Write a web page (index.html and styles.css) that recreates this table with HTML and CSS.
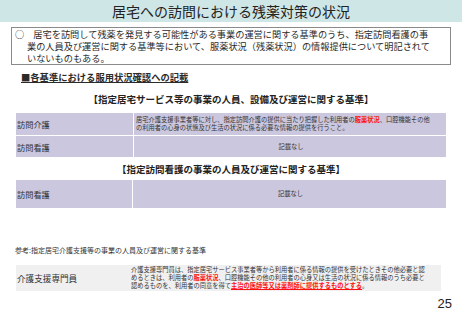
FILE: index.html
```html
<!DOCTYPE html>
<html lang="ja">
<head>
<meta charset="utf-8">
<link rel="stylesheet" href="styles.css">
</head>
<body>
<div class="slide">
  <header class="title">居宅への訪問における残薬対策の状況</header>
  <div class="summary">
    <p>○　居宅を訪問して残薬を発見する可能性がある事業の運営に関する基準のうち、指定訪問看護の事<br>業の人員及び運営に関する基準等において、服薬状況（残薬状況）の情報提供について明記されて<br>いないものもある。</p>
  </div>
  <div class="subhead">■各基準における服用状況確認への記載</div>
  <div class="heading h1">【指定居宅サービス等の事業の人員、設備及び運営に関する基準】</div>
  <div class="table t1">
    <div class="cell label">訪問介護</div>
    <div class="cell body"><p class="txt">居宅介護支援事業者等に対し、指定訪問介護の提供に当たり把握した利用者の<span class="red">服薬状況</span>、口腔機能その他<br>の利用者の心身の状態及び生活の状況に係る必要な情報の提供を行うこと。</p></div>
    <div class="cell label">訪問看護</div>
    <div class="cell body center">記載なし</div>
  </div>
  <div class="heading h2">【指定訪問看護の事業の人員及び運営に関する基準】</div>
  <div class="table t2">
    <div class="cell label">訪問看護</div>
    <div class="cell body center">記載なし</div>
  </div>
  <div class="ref">参考:指定居宅介護支援等の事業の人員及び運営に関する基準</div>
  <div class="table t3">
    <div class="cell label big">介護支援専門員</div>
    <div class="cell body"><p class="txt">介護支援専門員は、指定居宅サービス事業者等から利用者に係る情報の提供を受けたときその他必要と認<br>めるときは、利用者の<span class="red">服薬状況</span>、口腔機能その他の利用者の心身又は生活の状況に係る情報のうち必要と<br>認めるものを、利用者の同意を得て<span class="red ul">主治の医師等又は薬剤師に提供するものとする</span>。</p></div>
  </div>
  <div class="pageno">25</div>
</div>
</body>
</html>
```

FILE: styles.css
```css
html, body {
  margin: 0;
  padding: 0;
  background: #ffffff;
}
body {
  font-family: "Noto Sans CJK JP", "Noto Sans", sans-serif;
  color: #2b2b2b;
}
.slide {
  width: 462px;
  height: 320px;
  overflow: hidden;
  display: flex;
  flex-direction: column;
}
.title {
  height: 22px;
  background: #cfe6e6;
  font-size: 14px;
  line-height: 22px;
  text-align: center;
  color: #222;
}
.summary {
  margin: 5px 11px 0 11px;
  border: 1px solid #8a8a8a;
  padding: 0 4px 0 15px;
}
.summary p {
  margin: 0;
  font-size: 9.2px;
  line-height: 12px;
  text-indent: -12px;
  white-space: nowrap;
  color: #2a2a2a;
}
.subhead {
  margin: 6px 0 0 21px;
  font-size: 9.3px;
  line-height: 12px;
  font-weight: bold;
  text-decoration: underline;
  white-space: nowrap;
}
.heading {
  font-size: 9.5px;
  line-height: 12px;
  font-weight: bold;
  text-align: center;
  white-space: nowrap;
  color: #222;
}
.h1 { margin-top: 10px; }
.h2 { margin-top: 6px; }
.table {
  display: grid;
  gap: 1px;
  margin-left: 16px;
  width: 430px;
}
.t1 {
  margin-top: 8px;
  grid-template-columns: 117px 1fr;
  grid-template-rows: 22px 21px;
}
.t2 {
  margin-top: 5px;
  grid-template-columns: 116px 1fr;
  grid-template-rows: 28px;
}
.t3 {
  margin-top: 10px;
  width: 425px;
  grid-template-columns: 113px 1fr;
  grid-template-rows: 26px;
  gap: 0;
  background: #f0f0f0;
}
.cell {
  background: #cbc7de;
  display: flex;
  align-items: center;
  white-space: nowrap;
}
.t3 .cell { background: #f0f0f0; }
.label {
  font-size: 8.2px;
  padding-left: 1px;
  color: #333;
}
.label.big { font-size: 8.6px; }
.body {
  font-size: 6.25px;
  line-height: 7.6px;
  padding-left: 2px;
  color: #333;
}
.txt {
  margin: 0;
}
.t3 .body { line-height: 8px; }
.center { justify-content: center; }
.red {
  color: #ff1010;
  font-weight: bold;
}
.ul { text-decoration: underline; }
.ref {
  margin: 37px 0 0 15px;
  font-size: 7px;
  line-height: 10px;
  white-space: nowrap;
  color: #333;
}
.pageno {
  margin-top: 5px;
  padding-right: 10px;
  text-align: right;
  font-family: "Liberation Sans", Arial, sans-serif;
  font-size: 13px;
  line-height: 16px;
  color: #222;
}
```
